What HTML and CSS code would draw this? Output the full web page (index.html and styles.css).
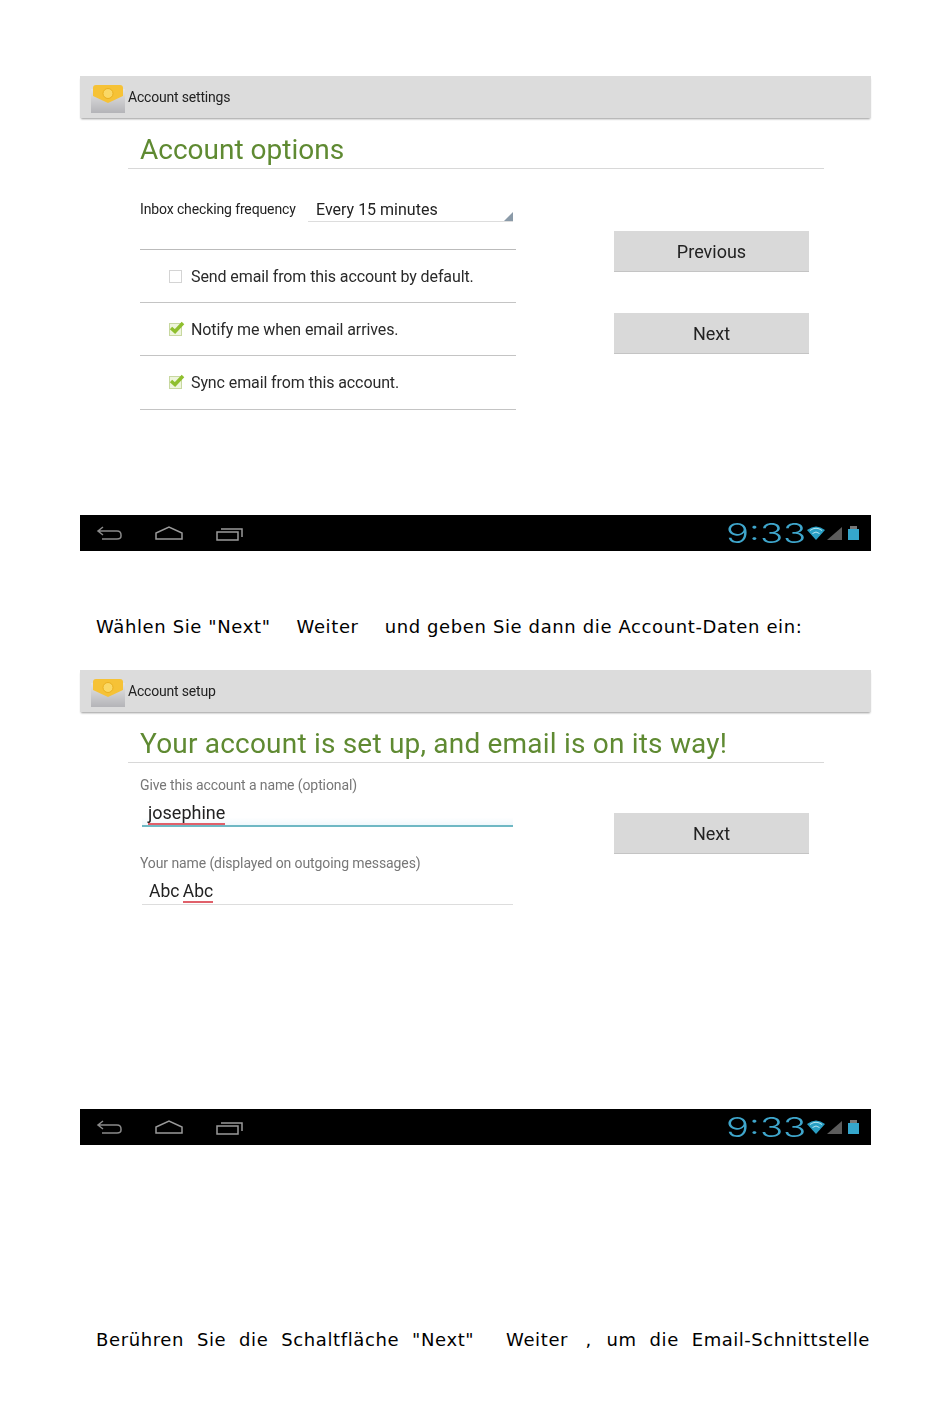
FILE: index.html
```html
<!DOCTYPE html>
<html lang="de">
<head>
<title>Account settings</title>
<meta charset="UTF-8">
<link rel="stylesheet" href="styles.css">
</head>
<body>

<!-- Account options screen -->
<div class="screen">
	<div class="actionBar">
		<svg class="appIcon" width="34" height="29" viewBox="0 0 34 29">
			<defs><linearGradient id="bodyA" x1="0" y1="0" x2="0" y2="1"><stop offset="0" stop-color="#e4e4e4"/><stop offset="1" stop-color="#b4b4b8"/></linearGradient></defs>
			<rect x="0" y="5" width="34" height="24" fill="url(#bodyA)"/>
			<path d="M2 4 Q2 1 5 1 L29 1 Q32 1 32 4 L32 12 L17 19 L2 12 Z" fill="#f6c236"/>
			<circle cx="17" cy="9.500" r="5" fill="#fad866" stroke="#eab020" stroke-width="1"/>
		</svg>
		<span class="barTitle">Account settings</span>
	</div>
	<div class="content">
		<h1 class="heading">Account options</h1>
		<div class="columns columnsOptions">
			<div class="formCol">
				<div class="freqRow">
					<span class="freqLabel">Inbox checking frequency</span>
					<span class="spinner">Every 15 minutes</span>
				</div>
				<div class="checkRow"><span class="box"></span>Send email from this account by default.</div>
				<div class="checkRow">
					<span class="box boxOn"><svg width="16" height="14" viewBox="0 0 16 14"><path d="M2 7 L6 10.500 L14 2" fill="none" stroke="#8fbf2e" stroke-width="3.500"/></svg></span>Notify me when email arrives.
				</div>
				<div class="checkRow">
					<span class="box boxOn"><svg width="16" height="14" viewBox="0 0 16 14"><path d="M2 7 L6 10.500 L14 2" fill="none" stroke="#8fbf2e" stroke-width="3.500"/></svg></span>Sync email from this account.
				</div>
			</div>
			<div class="buttonCol">
				<div class="btn">Previous</div>
				<div class="btn">Next</div>
			</div>
		</div>
	</div>
	<div class="navBar">
		<svg class="navIcons" width="150" height="20" viewBox="0 0 150 20">
			<path d="M5 7 H23 Q27 7 27 11 V12 Q27 15 23 15 H8 M9 3 L4 7 L9 11" fill="none" stroke="#8a8a8a" stroke-width="1.500"/>
			<path d="M62 15 V9 L75 3 L88 9 V15 Z" fill="none" stroke="#9a9a9a" stroke-width="1.500"/>
			<path d="M123 8 H144 V16 H123 Z M127 5 H148 V13" fill="none" stroke="#9a9a9a" stroke-width="1.500"/>
		</svg>
		<div class="status">
			<span class="clock">9:33</span>
			<svg width="52" height="18" viewBox="0 0 52 18">
				<path d="M0 6 Q9 -1 18 6 L9 16 Z" fill="#2a9fc4"/>
				<path d="M3 6.500 Q9 2 15 6.500 M5.500 9.500 Q9 6.500 12.500 9.500" fill="none" stroke="#b8e6f2" stroke-width="1"/>
				<path d="M20 16 L35 3 V16 Z" fill="#5c5c5c"/>
				<rect x="41" y="5" width="11" height="11" fill="#35a6cc"/>
				<rect x="43" y="2" width="7" height="3" fill="#777"/>
			</svg>
		</div>
	</div>
</div>

<p class="line lineFirst">Wählen Sie "Next"<span class="gap"></span>Weiter<span class="gap"></span>und geben Sie dann die Account-Daten ein:</p>

<!-- Account setup screen -->
<div class="screen">
	<div class="actionBar">
		<svg class="appIcon" width="34" height="29" viewBox="0 0 34 29">
			<defs><linearGradient id="bodyB" x1="0" y1="0" x2="0" y2="1"><stop offset="0" stop-color="#e4e4e4"/><stop offset="1" stop-color="#b4b4b8"/></linearGradient></defs>
			<rect x="0" y="5" width="34" height="24" fill="url(#bodyB)"/>
			<path d="M2 4 Q2 1 5 1 L29 1 Q32 1 32 4 L32 12 L17 19 L2 12 Z" fill="#f6c236"/>
			<circle cx="17" cy="9.500" r="5" fill="#fad866" stroke="#eab020" stroke-width="1"/>
		</svg>
		<span class="barTitle">Account setup</span>
	</div>
	<div class="content">
		<h1 class="heading headingLong">Your account is set up, and email is on its way!</h1>
		<div class="columns columnsSetup">
			<div class="formCol">
				<div class="fieldLabel">Give this account a name (optional)</div>
				<div class="field fieldFocus"><span class="typo">josephine</span></div>
				<div class="fieldLabel">Your name (displayed on outgoing messages)</div>
				<div class="field fieldName">Abc <span class="typo">Abc</span></div>
			</div>
			<div class="buttonCol">
				<div class="btn">Next</div>
			</div>
		</div>
	</div>
	<div class="navBar">
		<svg class="navIcons" width="150" height="20" viewBox="0 0 150 20">
			<path d="M5 7 H23 Q27 7 27 11 V12 Q27 15 23 15 H8 M9 3 L4 7 L9 11" fill="none" stroke="#8a8a8a" stroke-width="1.500"/>
			<path d="M62 15 V9 L75 3 L88 9 V15 Z" fill="none" stroke="#9a9a9a" stroke-width="1.500"/>
			<path d="M123 8 H144 V16 H123 Z M127 5 H148 V13" fill="none" stroke="#9a9a9a" stroke-width="1.500"/>
		</svg>
		<div class="status">
			<span class="clock">9:33</span>
			<svg width="52" height="18" viewBox="0 0 52 18">
				<path d="M0 6 Q9 -1 18 6 L9 16 Z" fill="#2a9fc4"/>
				<path d="M3 6.500 Q9 2 15 6.500 M5.500 9.500 Q9 6.500 12.500 9.500" fill="none" stroke="#b8e6f2" stroke-width="1"/>
				<path d="M20 16 L35 3 V16 Z" fill="#5c5c5c"/>
				<rect x="41" y="5" width="11" height="11" fill="#35a6cc"/>
				<rect x="43" y="2" width="7" height="3" fill="#777"/>
			</svg>
		</div>
	</div>
</div>

<p class="line lineLast"><span>Berühren</span><span>Sie</span><span>die</span><span>Schaltfläche</span><span>"Next"</span><span class="wide">Weiter</span><span class="comma">,</span><span>um</span><span>die</span><span class="tight">Email-Schnittstelle</span></p>

</body>
</html>
```

FILE: styles.css
```css
body {
	margin: 0;
	padding: 76px 79px 0 80px;
	background: #fff;
	font-family: "Roboto", sans-serif;
	color: #222;
}
.screen {
	height: 475px;
	display: flex;
	flex-direction: column;
	filter: blur(0.35px);
}
.actionBar {
	height: 42px;
	flex: none;
	display: flex;
	align-items: center;
	background: #dcdcdc;
	box-shadow: 0 2px 2px -1px #999;
	padding-left: 11px;
}
.appIcon {
	margin-right: 3px;
	margin-top: 3px;
}
.barTitle {
	font-size: 14px;
	letter-spacing: -0.190px;
	color: #222;
}
.content {
	flex: 1;
	padding: 0 47px 0 48px;
}
.heading {
	margin: 0;
	padding: 12px 0 0 12px;
	height: 51px;
	box-sizing: border-box;
	border-bottom: 1px solid #d8d8d8;
	font-size: 28px;
	line-height: 40px;
	font-weight: 400;
	color: #5f8a32;
	white-space: nowrap;
}
.headingLong {
	letter-spacing: 0.200px;
}
.columns {
	display: flex;
}
.formCol {
	width: 376px;
	margin-left: 12px;
}
.buttonCol {
	margin-left: 98px;
	display: flex;
	flex-direction: column;
	gap: 41px;
}
.columnsOptions .buttonCol {
	padding-top: 62px;
}
.columnsSetup .buttonCol {
	padding-top: 50px;
}
.btn {
	width: 195px;
	height: 41px;
	background: #d9d9d9;
	border-bottom: 1px solid #c4c4c4;
	box-sizing: border-box;
	text-align: center;
	font-size: 18px;
	line-height: 41px;
	color: #222;
}
.freqRow {
	height: 81px;
	padding-top: 30px;
	box-sizing: border-box;
	display: flex;
	border-bottom: 1px solid #bbb;
}
.freqLabel {
	font-size: 14px;
	letter-spacing: -0.125px;
	line-height: 20px;
	width: 168px;
	flex: none;
}
.spinner {
	height: 23px;
	width: 205px;
	box-sizing: border-box;
	padding-left: 8px;
	font-size: 16px;
	line-height: 21px;
	border-bottom: 1px solid #ddd;
	position: relative;
}
.spinner::after {
	content: "";
	position: absolute;
	right: 0;
	bottom: 0;
	border-style: solid;
	border-width: 0 0 9px 9px;
	border-color: transparent transparent #8a9aa8 transparent;
}
.checkRow {
	height: 53.200px;
	box-sizing: border-box;
	border-bottom: 1px solid #c4c4c4;
	display: flex;
	align-items: center;
	padding-left: 29px;
	font-size: 16px;
	letter-spacing: -0.100px;
	color: #2a2a2a;
}
.box {
	width: 11px;
	height: 11px;
	border: 1px solid #d4d4d4;
	margin-right: 9px;
	position: relative;
	flex: none;
}
.boxOn {
	background: #eef5dc;
	border-color: #c8d8a0;
}
.boxOn svg {
	position: absolute;
	left: -1px;
	top: -3px;
}
.fieldLabel {
	font-size: 14px;
	letter-spacing: -0.100px;
	color: #777;
	line-height: 20px;
	margin-top: 12px;
}
.field {
	margin: 5px 3px 26px 2px;
	height: 27px;
	box-sizing: border-box;
	padding-left: 6px;
	font-size: 18px;
	line-height: 26px;
	color: #222;
	border-bottom: 1px solid #ddd;
}
.fieldName {
	padding-left: 7px;
	font-size: 17.500px;
	word-spacing: -1px;
}
.fieldFocus {
	border-bottom: 2px solid #6fb8c4;
	background: linear-gradient(to bottom, #fff 70%, #f0f8fc);
}
.typo {
	border-bottom: 2px solid #e0606a;
}
.navBar {
	height: 36px;
	flex: none;
	background: #000;
	display: flex;
	align-items: center;
	justify-content: space-between;
}
.navIcons {
	margin-left: 14px;
	margin-top: 1px;
}
.status {
	display: flex;
	align-items: center;
	margin-right: 12px;
}
.clock {
	display: inline-block;
	width: 79px;
	margin-left: -2px;
	margin-right: 2px;
	padding-top: 2px;
	font-family: "Inter", sans-serif;
	font-weight: 300;
	font-size: 27px;
	line-height: 36px;
	color: #3fa6cc;
	transform: scaleX(1.420);
	transform-origin: left center;
}
.line {
	font-family: "DejaVu Sans", sans-serif;
	font-size: 18px;
	letter-spacing: 0.620px;
	line-height: 24px;
	color: #000;
	margin: 0;
	padding-left: 16px;
	white-space: nowrap;
}
.lineFirst {
	margin-top: 64px;
	margin-bottom: 31px;
}
.lineLast {
	margin-top: 183px;
	display: flex;
	gap: 12.800px;
}
.lineLast .wide {
	margin-left: 19px;
}
.lineLast .comma {
	margin-left: 4.500px;
	margin-right: 2px;
}
.lineLast .tight {
	letter-spacing: 0.520px;
}
.gap {
	display: inline-block;
	width: 26px;
}
```
